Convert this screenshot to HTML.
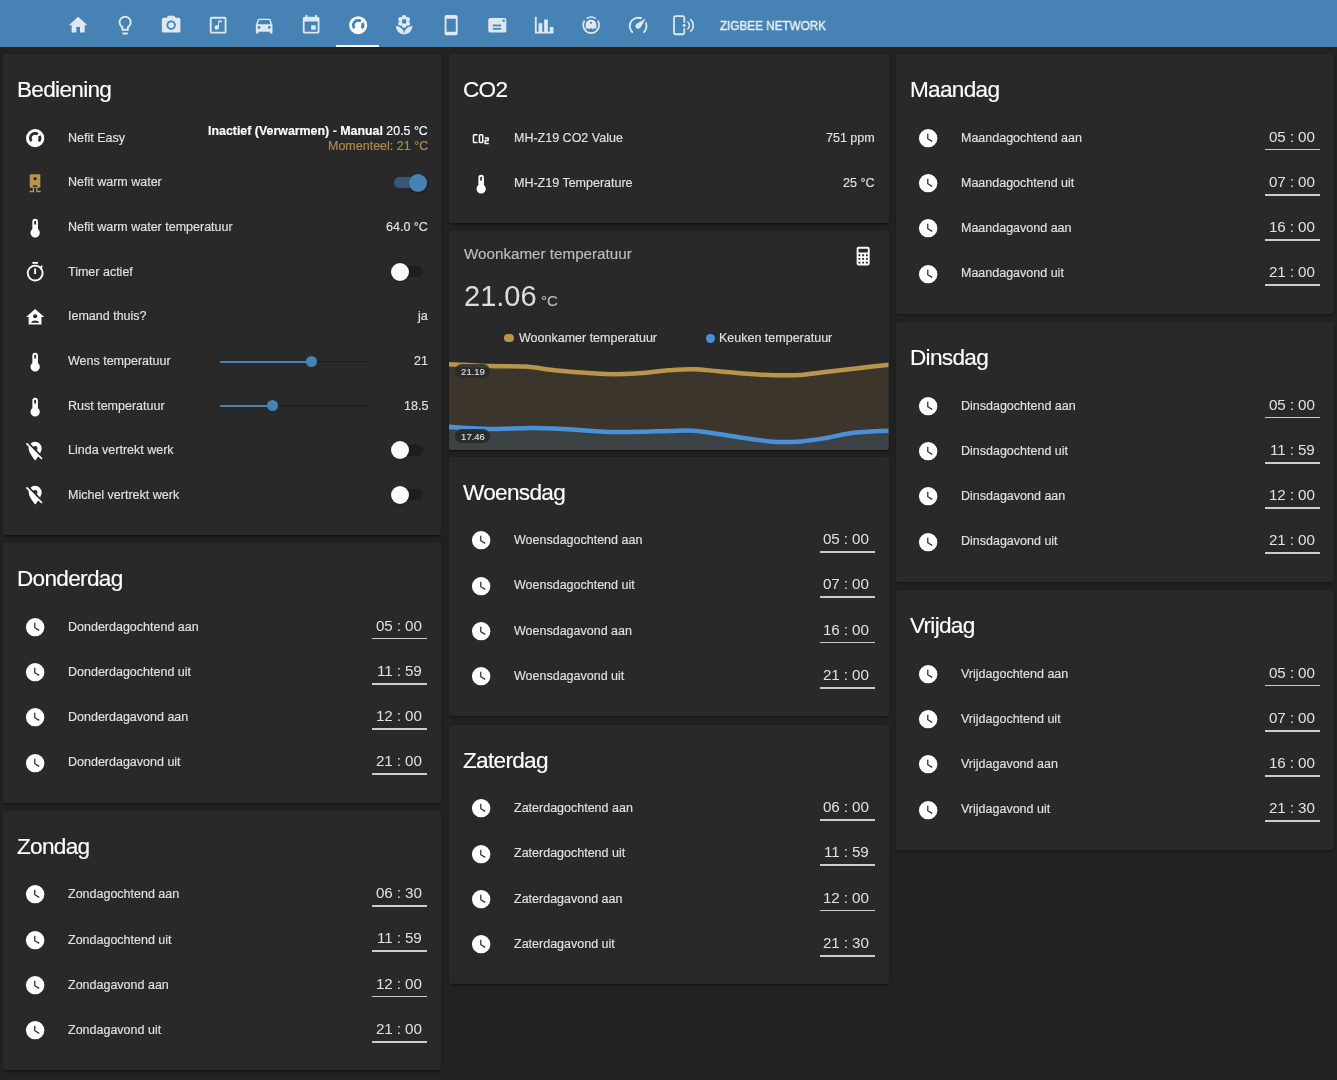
<!DOCTYPE html><html><head><meta charset="utf-8"><style>
html,body{margin:0;padding:0;}
body{width:1337px;height:1080px;background:#222222;position:relative;overflow:hidden;font-family:"Liberation Sans",sans-serif;}
.t{position:absolute;white-space:nowrap;will-change:transform;-webkit-text-stroke:0.15px currentColor;}
.i{position:absolute;display:block;}
.card{position:absolute;background:#292929;border-radius:2px;box-shadow:0 2px 2px 0 rgba(0,0,0,.14),0 1px 5px 0 rgba(0,0,0,.12),0 3px 1px -2px rgba(0,0,0,.2);}
.bar{position:absolute;}
</style></head><body>
<div class="bar" style="left:0;top:0;width:1337px;height:47px;background:#4682b4"></div>
<svg class="i" style="left:67.25px;top:13.85px;width:22.3px;height:22.3px" viewBox="0 0 24 24" fill="rgba(255,255,255,0.82)"><path d="M10,20V14H14V20H19V12H22L12,3L2,12H5V20H10Z"/></svg>
<svg class="i" style="left:113.80px;top:13.85px;width:22.3px;height:22.3px" viewBox="0 0 24 24" fill="rgba(255,255,255,0.82)"><path d="M12,2A7,7 0 0,1 19,9C19,11.38 17.81,13.47 16,14.74V17A1,1 0 0,1 15,18H9A1,1 0 0,1 8,17V14.74C6.19,13.470 5,11.38 5,9A7,7 0 0,1 12,2M9,21V20H15V21A1,1 0 0,1 14,22H10A1,1 0 0,1 9,21M12,4A5,5 0 0,0 7,9C7,11.05 8.23,12.81 10,13.58V16H14V13.58C15.77,12.81 17,11.05 17,9A5,5 0 0,0 12,4Z"/></svg>
<svg class="i" style="left:160.35px;top:13.85px;width:22.3px;height:22.3px" viewBox="0 0 24 24" fill="rgba(255,255,255,0.82)"><path fill-rule="evenodd" d="M4,4H7L9,2H15L17,4H20A2,2 0 0,1 22,6V18A2,2 0 0,1 20,20H4A2,2 0 0,1 2,18V6A2,2 0 0,1 4,4Z M12,7A5,5 0 1,0 12,17A5,5 0 1,0 12,7Z M12,9A3,3 0 1,0 12,15A3,3 0 1,0 12,9Z"/></svg>
<svg class="i" style="left:206.90px;top:13.85px;width:22.3px;height:22.3px" viewBox="0 0 24 24" fill="rgba(255,255,255,0.82)"><path d="M16,9H13V14.5A2.5,2.5 0 0,1 10.5,17A2.5,2.5 0 0,1 8,14.5A2.5,2.5 0 0,1 10.5,12C11.07,12 11.58,12.19 12,12.5V7H16V9M19,3A2,2 0 0,1 21,5V19A2,2 0 0,1 19,21H5A2,2 0 0,1 3,19V5A2,2 0 0,1 5,3H19M5,5V19H19V5H5Z"/></svg>
<svg class="i" style="left:253.45px;top:13.85px;width:22.3px;height:22.3px" viewBox="0 0 24 24" fill="rgba(255,255,255,0.82)"><path d="M5,11L6.5,6.5H17.5L19,11M17.5,16A1.5,1.5 0 0,1 16,14.5A1.5,1.5 0 0,1 17.5,13A1.5,1.5 0 0,1 19,14.5A1.5,1.5 0 0,1 17.5,16M6.5,16A1.5,1.5 0 0,1 5,14.5A1.5,1.5 0 0,1 6.5,13A1.5,1.5 0 0,1 8,14.5A1.5,1.5 0 0,1 6.5,16M18.92,6C18.72,5.42 18.16,5 17.5,5H6.5C5.840,5 5.28,5.42 5.08,6L3,12V20A1,1 0 0,0 4,21H5A1,1 0 0,0 6,20V19H18V20A1,1 0 0,0 19,21H20A1,1 0 0,0 21,20V12L18.92,6Z"/></svg>
<svg class="i" style="left:300.00px;top:13.85px;width:22.3px;height:22.3px" viewBox="0 0 24 24" fill="rgba(255,255,255,0.82)"><path d="M19,19H5V8H19M16,1V3H8V1H6V3H5C3.89,3 3,3.89 3,5V19A2,2 0 0,0 5,21H19A2,2 0 0,0 21,19V5C21,3.89 20.1,3 19,3H18V1M17,12H12V17H17V12Z"/></svg>
<svg class="i" style="left:346.55px;top:13.85px;width:22.3px;height:22.3px" viewBox="0 0 24 24" fill="#ffffff"><circle cx="12" cy="12" r="9.7"/><path fill="none" stroke="#4682b4" stroke-width="3.1" d="M8.055,15.31A5.15,5.15 0 0,1 14.95,7.78M16.55,9.58A5.15,5.15 0 0,1 15.89,15.38"/></svg>
<svg class="i" style="left:393.10px;top:13.85px;width:22.3px;height:22.3px" viewBox="0 0 24 24" fill="rgba(255,255,255,0.82)"><path d="M3,13A9,9 0 0,0 12,22C12,17 7.97,13 3,13M12,5.5A2.5,2.5 0 0,1 14.5,8A2.5,2.5 0 0,1 12,10.5A2.5,2.5 0 0,1 9.5,8A2.5,2.5 0 0,1 12,5.5M5.6,10.25A2.5,2.5 0 0,0 8.1,12.75C8.63,12.75 9.12,12.58 9.5,12.31C9.5,12.37 9.5,12.43 9.5,12.5A2.5,2.5 0 0,0 12,15A2.5,2.5 0 0,0 14.5,12.5C14.5,12.43 14.5,12.37 14.5,12.31C14.88,12.58 15.37,12.75 15.9,12.75C17.28,12.75 18.4,11.63 18.4,10.25C18.4,9.25 17.81,8.4 16.97,8C17.81,7.6 18.4,6.74 18.4,5.75C18.4,4.37 17.28,3.25 15.9,3.25C15.37,3.25 14.88,3.41 14.5,3.69C14.5,3.63 14.5,3.56 14.5,3.5A2.5,2.5 0 0,0 12,1A2.5,2.5 0 0,0 9.5,3.5C9.5,3.56 9.5,3.63 9.5,3.69C9.12,3.41 8.63,3.25 8.1,3.25A2.5,2.5 0 0,0 5.6,5.75C5.6,6.74 6.19,7.6 7.03,8C6.19,8.4 5.6,9.25 5.6,10.25M12,22A9,9 0 0,0 21,13C16,13 12,17 12,22Z"/></svg>
<svg class="i" style="left:439.65px;top:13.85px;width:22.3px;height:22.3px" viewBox="0 0 24 24" fill="rgba(255,255,255,0.82)"><path d="M17,19H7V5H17M17,1H7C5.89,1 5,1.89 5,3V21A2,2 0 0,0 7,23H17A2,2 0 0,0 19,21V3C19,1.89 18.1,1 17,1Z"/></svg>
<svg class="i" style="left:486.20px;top:13.85px;width:22.3px;height:22.3px" viewBox="0 0 24 24" fill="rgba(255,255,255,0.82)"><rect x="2.5" y="4.3" width="19.4" height="15.6" rx="2"/><rect x="7.3" y="11.4" width="9" height="1.9" fill="#4682b4"/><rect x="7.3" y="15" width="9" height="1.9" fill="#4682b4"/><rect x="17.8" y="6" width="2.4" height="2.4" fill="#4682b4"/></svg>
<svg class="i" style="left:532.75px;top:13.85px;width:22.3px;height:22.3px" viewBox="0 0 24 24" fill="rgba(255,255,255,0.82)"><path d="M22,21H2V3H4V19H6V10H10V19H12V6H16V19H18V14H22V21Z"/></svg>
<svg class="i" style="left:580.10px;top:13.85px;width:22.3px;height:22.3px" viewBox="0 0 24 24" fill="rgba(255,255,255,0.82)"><path fill="none" stroke="rgba(255,255,255,0.82)" stroke-width="1.8" d="M7.07,4.95A8.6,8.6 0 0,1 16.93,4.95M19.05,7.07A8.6,8.6 0 1,1 4.95,7.07"/><path d="M6.1,16.4V11.6A5.75,5.75 0 0,1 17.6,11.6V16.4L15.7,15.2L13.8,16.4L11.85,15.2L9.9,16.4L8,15.2Z"/><circle cx="11.85" cy="9.4" r="1.15" fill="#4682b4"/></svg>
<svg class="i" style="left:626.55px;top:13.85px;width:22.3px;height:22.3px" viewBox="0 0 24 24" fill="rgba(255,255,255,0.82)"><path d="M12,16A3,3 0 0,1 9,13C9,11.88 9.61,10.9 10.5,10.39L20.21,4.77L14.68,14.35C14.18,15.33 13.17,16 12,16M12,3C13.81,3 15.5,3.5 16.97,4.32L14.87,5.53C14,5.19 13,5 12,5A8,8 0 0,0 4,13C4,15.21 4.89,17.21 6.34,18.65H6.35C6.74,19.04 6.74,19.67 6.35,20.06C5.96,20.45 5.320,20.45 4.93,20.07V20.07C3.12,18.26 2,15.76 2,13A10,10 0 0,1 12,3M22,13C22,15.76 20.88,18.26 19.07,20.07V20.07C18.68,20.45 18.05,20.45 17.66,20.06C17.27,19.67 17.27,19.04 17.66,18.65V18.65C19.11,17.2 20,15.21 20,13C20,12 19.81,11 19.46,10.1L20.67,8C21.5,9.5 22,11.18 22,13Z"/></svg>
<svg class="i" style="left:672.40px;top:13.85px;width:22.3px;height:22.3px" viewBox="0 0 24 24" fill="rgba(255,255,255,0.82)"><path fill="none" stroke="rgba(255,255,255,0.82)" stroke-width="1.9" d="M13.25,9.3V4.1Q13.25,2.3 11.45,2.3H4Q2.15,2.3 2.15,4.1V20Q2.15,21.8 4,21.8H11.45Q13.25,21.8 13.25,20V15.3"/><circle cx="13.1" cy="12.3" r="1.6"/><path fill="none" stroke="rgba(255,255,255,0.82)" stroke-width="1.7" d="M16.6,8.2A5,5 0 0,1 16.6,16.4M19.6,5.6A8.5,8.5 0 0,1 19.6,19"/></svg>
<div class="bar" style="left:336px;top:45px;width:43px;height:2px;background:#fff"></div>
<div class="t" style="left:719.80px;top:18.48px;font-size:12.8px;line-height:15.36px;color:rgba(255,255,255,0.84);font-weight:normal;letter-spacing:0px;-webkit-text-stroke:0.4px rgba(255,255,255,0.84);transform-origin:0 50%;transform:scaleX(0.915)">ZIGBEE NETWORK</div>
<div class="card" style="left:3px;top:54px;width:438px;height:481px"></div>
<div class="t" style="left:16.60px;top:76.01px;font-size:22.6px;line-height:27.12px;color:#ffffff;font-weight:normal;letter-spacing:-0.7px">Bediening</div>
<div class="t" style="left:68.00px;top:130.77px;font-size:12.5px;line-height:15.0px;color:#e1e1e1;font-weight:normal;">Nefit Easy</div>
<svg class="i" style="left:23.85px;top:127.15px;width:22.3px;height:22.3px" viewBox="0 0 24 24" fill="#ffffff"><circle cx="12" cy="12" r="9.8"/><path fill="none" stroke="#292929" stroke-width="3.0" d="M8.055,15.31A5.15,5.15 0 0,1 14.95,7.78M16.55,9.58A5.15,5.15 0 0,1 15.89,15.38"/></svg>
<div class="t" style="left:68.00px;top:175.41px;font-size:12.5px;line-height:15.0px;color:#e1e1e1;font-weight:normal;">Nefit warm water</div>
<svg class="i" style="left:23.85px;top:171.79px;width:22.3px;height:22.3px" viewBox="0 0 24 24" fill="#b8954a"><rect x="6.2" y="2.3" width="11.4" height="14.6" rx="1.3"/><circle cx="11.9" cy="7.2" r="1.75" fill="#292929"/><rect x="9.8" y="14.3" width="4.5" height="1.6" fill="#292929"/><path d="M9.4,16.5H10.9V21.8H6V20.3H9.4Z M14.6,16.5H13.1V21.8H18V20.3H14.6Z"/></svg>
<div class="t" style="left:68.00px;top:220.05px;font-size:12.5px;line-height:15.0px;color:#e1e1e1;font-weight:normal;">Nefit warm water temperatuur</div>
<svg class="i" style="left:23.85px;top:217.23px;width:22.3px;height:22.3px" viewBox="0 0 24 24" fill="#ffffff"><path fill-rule="evenodd" d="M15,13V5A3,3 0 0,0 9,5V13A5,5 0 1,0 15,13Z M12,4A1,1 0 0,1 13,5V8H11V5A1,1 0 0,1 12,4Z"/></svg>
<div class="t" style="left:68.00px;top:264.69px;font-size:12.5px;line-height:15.0px;color:#e1e1e1;font-weight:normal;">Timer actief</div>
<svg class="i" style="left:23.85px;top:261.07px;width:22.3px;height:22.3px" viewBox="0 0 24 24" fill="#ffffff"><path d="M12,20A7,7 0 0,1 5,13A7,7 0 0,1 12,6A7,7 0 0,1 19,13A7,7 0 0,1 12,20M19.03,7.39L20.45,5.97C20,5.46 19.55,5 19.04,4.56L17.62,6C16.07,4.74 14.12,4 12,4A9,9 0 0,0 3,13A9,9 0 0,0 12,22C17,22 21,17.97 21,13C21,10.88 20.26,8.93 19.03,7.39M11,14H13V8H11M15,1H9V3H15V1Z"/></svg>
<div class="t" style="left:68.00px;top:309.33px;font-size:12.5px;line-height:15.0px;color:#e1e1e1;font-weight:normal;">Iemand thuis?</div>
<svg class="i" style="left:23.85px;top:305.71px;width:22.3px;height:22.3px" viewBox="0 0 24 24" fill="#ffffff"><path d="M12,3.3L2.3,11.8H5V19.9H18.8V11.8H21.7L12,3.3Z"/><circle cx="12" cy="11.1" r="2.2" fill="#292929"/><path fill="#292929" d="M7.7,18.1C8.3,14.6 15.7,14.6 16.3,18.1Z"/></svg>
<div class="t" style="left:68.00px;top:353.97px;font-size:12.5px;line-height:15.0px;color:#e1e1e1;font-weight:normal;">Wens temperatuur</div>
<svg class="i" style="left:23.85px;top:351.15px;width:22.3px;height:22.3px" viewBox="0 0 24 24" fill="#ffffff"><path fill-rule="evenodd" d="M15,13V5A3,3 0 0,0 9,5V13A5,5 0 1,0 15,13Z M12,4A1,1 0 0,1 13,5V8H11V5A1,1 0 0,1 12,4Z"/></svg>
<div class="t" style="left:68.00px;top:398.61px;font-size:12.5px;line-height:15.0px;color:#e1e1e1;font-weight:normal;">Rust temperatuur</div>
<svg class="i" style="left:23.85px;top:395.79px;width:22.3px;height:22.3px" viewBox="0 0 24 24" fill="#ffffff"><path fill-rule="evenodd" d="M15,13V5A3,3 0 0,0 9,5V13A5,5 0 1,0 15,13Z M12,4A1,1 0 0,1 13,5V8H11V5A1,1 0 0,1 12,4Z"/></svg>
<div class="t" style="left:68.00px;top:443.25px;font-size:12.5px;line-height:15.0px;color:#e1e1e1;font-weight:normal;">Linda vertrekt werk</div>
<svg class="i" style="left:23.85px;top:439.63px;width:22.3px;height:22.3px" viewBox="0 0 24 24" fill="#ffffff"><path d="M16.37,16.1L11.75,11.47L11.64,11.36L3.27,3L2,4.27L5.18,7.45C5.06,7.95 5,8.46 5,9C5,14.25 12,22 12,22C12,22 13.67,20.15 15.37,17.65L18.73,21L20,19.72M12,6.5A2.5,2.5 0 0,1 14.5,9C14.5,9.73 14.17,10.39 13.67,10.85L17.3,14.5C18.28,12.62 19,10.68 19,9A7,7 0 0,0 12,2C10,2 8.24,2.82 6.96,4.14L10.15,7.33C10.61,6.82 11.26,6.5 12,6.5Z"/></svg>
<div class="t" style="left:68.00px;top:487.89px;font-size:12.5px;line-height:15.0px;color:#e1e1e1;font-weight:normal;">Michel vertrekt werk</div>
<svg class="i" style="left:23.85px;top:484.27px;width:22.3px;height:22.3px" viewBox="0 0 24 24" fill="#ffffff"><path d="M16.37,16.1L11.75,11.47L11.64,11.36L3.27,3L2,4.27L5.18,7.45C5.06,7.95 5,8.46 5,9C5,14.25 12,22 12,22C12,22 13.67,20.15 15.37,17.65L18.73,21L20,19.72M12,6.5A2.5,2.5 0 0,1 14.5,9C14.5,9.73 14.17,10.39 13.67,10.85L17.3,14.5C18.28,12.62 19,10.68 19,9A7,7 0 0,0 12,2C10,2 8.24,2.82 6.96,4.14L10.15,7.33C10.61,6.82 11.26,6.5 12,6.5Z"/></svg>
<div class="t" style="right:908.80px;top:123.56px;font-size:12.4px;line-height:14.88px;color:#ffffff;font-weight:bold;text-align:right;">Inactief (Verwarmen) - Manual <span style="font-weight:normal">20.5 °C</span></div>
<div class="t" style="right:908.80px;top:138.97px;font-size:12.5px;line-height:15.0px;color:#ad8d48;font-weight:normal;text-align:right;">Momenteel: 21 °C</div>
<div class="t" style="right:908.80px;top:220.05px;font-size:12.5px;line-height:15.0px;color:#e1e1e1;font-weight:normal;text-align:right;">64.0 °C</div>
<div class="t" style="right:908.80px;top:309.33px;font-size:12.5px;line-height:15.0px;color:#e1e1e1;font-weight:normal;text-align:right;">ja</div>
<div class="t" style="right:908.80px;top:353.97px;font-size:12.5px;line-height:15.0px;color:#e1e1e1;font-weight:normal;text-align:right;">21</div>
<div class="t" style="right:908.80px;top:398.61px;font-size:12.5px;line-height:15.0px;color:#e1e1e1;font-weight:normal;text-align:right;">18.5</div>
<div class="bar" style="left:394px;top:177.0px;width:29px;height:11px;border-radius:6px;background:rgba(70,130,180,0.55)"></div>
<div class="bar" style="left:409px;top:173.5px;width:18px;height:18px;border-radius:50%;background:#4682b4;box-shadow:0 1px 2px rgba(0,0,0,.3)"></div>
<div class="bar" style="left:394px;top:266.0px;width:29px;height:11px;border-radius:6px;background:#1e1e1e"></div>
<div class="bar" style="left:391px;top:262.5px;width:18px;height:18px;border-radius:50%;background:#fafafa;box-shadow:0 1px 2px rgba(0,0,0,.3)"></div>
<div class="bar" style="left:394px;top:444.5px;width:29px;height:11px;border-radius:6px;background:#1e1e1e"></div>
<div class="bar" style="left:391px;top:441px;width:18px;height:18px;border-radius:50%;background:#fafafa;box-shadow:0 1px 2px rgba(0,0,0,.3)"></div>
<div class="bar" style="left:394px;top:489.0px;width:29px;height:11px;border-radius:6px;background:#1e1e1e"></div>
<div class="bar" style="left:391px;top:485.5px;width:18px;height:18px;border-radius:50%;background:#fafafa;box-shadow:0 1px 2px rgba(0,0,0,.3)"></div>
<div class="bar" style="left:220px;top:361.0px;width:152px;height:1px;background:#1f1f1f"></div>
<div class="bar" style="left:220px;top:360.5px;width:91.5px;height:2px;background:#4682b4"></div>
<div class="bar" style="left:306.0px;top:356.0px;width:11px;height:11px;border-radius:50%;background:#4682b4"></div>
<div class="bar" style="left:220px;top:405.0px;width:152px;height:1px;background:#1f1f1f"></div>
<div class="bar" style="left:220px;top:404.5px;width:52.5px;height:2px;background:#4682b4"></div>
<div class="bar" style="left:267.0px;top:400.0px;width:11px;height:11px;border-radius:50%;background:#4682b4"></div>
<div class="card" style="left:3px;top:543px;width:438px;height:259.70000000000005px"></div>
<div class="t" style="left:16.60px;top:565.01px;font-size:22.6px;line-height:27.12px;color:#ffffff;font-weight:normal;letter-spacing:-0.7px">Donderdag</div>
<svg class="i" style="left:23.85px;top:615.75px;width:22.3px;height:22.3px" viewBox="0 0 24 24" fill="#ffffff"><circle cx="12" cy="12" r="9.9"/><path fill="none" stroke="#292929" stroke-width="1.35" d="M11.6,7.2V12.6L16.4,15.5"/></svg>
<div class="t" style="left:68.00px;top:619.67px;font-size:12.5px;line-height:15.0px;color:#e1e1e1;font-weight:normal;">Donderdagochtend aan</div>
<div class="t" style="right:915.50px;top:616.51px;font-size:15.2px;line-height:18.24px;color:#e1e1e1;font-weight:normal;text-align:right;letter-spacing:-0.1px;-webkit-text-stroke:0">05 : 00</div>
<div class="bar" style="left:372px;top:637.50px;width:55px;height:1.75px;background:#cdcdcd"></div>
<svg class="i" style="left:23.85px;top:661.00px;width:22.3px;height:22.3px" viewBox="0 0 24 24" fill="#ffffff"><circle cx="12" cy="12" r="9.9"/><path fill="none" stroke="#292929" stroke-width="1.35" d="M11.6,7.2V12.6L16.4,15.5"/></svg>
<div class="t" style="left:68.00px;top:664.92px;font-size:12.5px;line-height:15.0px;color:#e1e1e1;font-weight:normal;">Donderdagochtend uit</div>
<div class="t" style="right:915.50px;top:661.76px;font-size:15.2px;line-height:18.24px;color:#e1e1e1;font-weight:normal;text-align:right;letter-spacing:-0.1px;-webkit-text-stroke:0">11 : 59</div>
<div class="bar" style="left:372px;top:682.75px;width:55px;height:1.75px;background:#cdcdcd"></div>
<svg class="i" style="left:23.85px;top:706.25px;width:22.3px;height:22.3px" viewBox="0 0 24 24" fill="#ffffff"><circle cx="12" cy="12" r="9.9"/><path fill="none" stroke="#292929" stroke-width="1.35" d="M11.6,7.2V12.6L16.4,15.5"/></svg>
<div class="t" style="left:68.00px;top:710.17px;font-size:12.5px;line-height:15.0px;color:#e1e1e1;font-weight:normal;">Donderdagavond aan</div>
<div class="t" style="right:915.50px;top:707.01px;font-size:15.2px;line-height:18.24px;color:#e1e1e1;font-weight:normal;text-align:right;letter-spacing:-0.1px;-webkit-text-stroke:0">12 : 00</div>
<div class="bar" style="left:372px;top:728.00px;width:55px;height:1.75px;background:#cdcdcd"></div>
<svg class="i" style="left:23.85px;top:751.50px;width:22.3px;height:22.3px" viewBox="0 0 24 24" fill="#ffffff"><circle cx="12" cy="12" r="9.9"/><path fill="none" stroke="#292929" stroke-width="1.35" d="M11.6,7.2V12.6L16.4,15.5"/></svg>
<div class="t" style="left:68.00px;top:755.42px;font-size:12.5px;line-height:15.0px;color:#e1e1e1;font-weight:normal;">Donderdagavond uit</div>
<div class="t" style="right:915.50px;top:752.26px;font-size:15.2px;line-height:18.24px;color:#e1e1e1;font-weight:normal;text-align:right;letter-spacing:-0.1px;-webkit-text-stroke:0">21 : 00</div>
<div class="bar" style="left:372px;top:773.25px;width:55px;height:1.75px;background:#cdcdcd"></div>
<div class="card" style="left:3px;top:810.6px;width:438px;height:259.69999999999993px"></div>
<div class="t" style="left:16.60px;top:832.61px;font-size:22.6px;line-height:27.12px;color:#ffffff;font-weight:normal;letter-spacing:-0.7px">Zondag</div>
<svg class="i" style="left:23.85px;top:883.35px;width:22.3px;height:22.3px" viewBox="0 0 24 24" fill="#ffffff"><circle cx="12" cy="12" r="9.9"/><path fill="none" stroke="#292929" stroke-width="1.35" d="M11.6,7.2V12.6L16.4,15.5"/></svg>
<div class="t" style="left:68.00px;top:887.27px;font-size:12.5px;line-height:15.0px;color:#e1e1e1;font-weight:normal;">Zondagochtend aan</div>
<div class="t" style="right:915.50px;top:884.11px;font-size:15.2px;line-height:18.24px;color:#e1e1e1;font-weight:normal;text-align:right;letter-spacing:-0.1px;-webkit-text-stroke:0">06 : 30</div>
<div class="bar" style="left:372px;top:905.10px;width:55px;height:1.75px;background:#cdcdcd"></div>
<svg class="i" style="left:23.85px;top:928.60px;width:22.3px;height:22.3px" viewBox="0 0 24 24" fill="#ffffff"><circle cx="12" cy="12" r="9.9"/><path fill="none" stroke="#292929" stroke-width="1.35" d="M11.6,7.2V12.6L16.4,15.5"/></svg>
<div class="t" style="left:68.00px;top:932.52px;font-size:12.5px;line-height:15.0px;color:#e1e1e1;font-weight:normal;">Zondagochtend uit</div>
<div class="t" style="right:915.50px;top:929.36px;font-size:15.2px;line-height:18.24px;color:#e1e1e1;font-weight:normal;text-align:right;letter-spacing:-0.1px;-webkit-text-stroke:0">11 : 59</div>
<div class="bar" style="left:372px;top:950.35px;width:55px;height:1.75px;background:#cdcdcd"></div>
<svg class="i" style="left:23.85px;top:973.85px;width:22.3px;height:22.3px" viewBox="0 0 24 24" fill="#ffffff"><circle cx="12" cy="12" r="9.9"/><path fill="none" stroke="#292929" stroke-width="1.35" d="M11.6,7.2V12.6L16.4,15.5"/></svg>
<div class="t" style="left:68.00px;top:977.77px;font-size:12.5px;line-height:15.0px;color:#e1e1e1;font-weight:normal;">Zondagavond aan</div>
<div class="t" style="right:915.50px;top:974.61px;font-size:15.2px;line-height:18.24px;color:#e1e1e1;font-weight:normal;text-align:right;letter-spacing:-0.1px;-webkit-text-stroke:0">12 : 00</div>
<div class="bar" style="left:372px;top:995.60px;width:55px;height:1.75px;background:#cdcdcd"></div>
<svg class="i" style="left:23.85px;top:1019.10px;width:22.3px;height:22.3px" viewBox="0 0 24 24" fill="#ffffff"><circle cx="12" cy="12" r="9.9"/><path fill="none" stroke="#292929" stroke-width="1.35" d="M11.6,7.2V12.6L16.4,15.5"/></svg>
<div class="t" style="left:68.00px;top:1023.02px;font-size:12.5px;line-height:15.0px;color:#e1e1e1;font-weight:normal;">Zondagavond uit</div>
<div class="t" style="right:915.50px;top:1019.86px;font-size:15.2px;line-height:18.24px;color:#e1e1e1;font-weight:normal;text-align:right;letter-spacing:-0.1px;-webkit-text-stroke:0">21 : 00</div>
<div class="bar" style="left:372px;top:1040.85px;width:55px;height:1.75px;background:#cdcdcd"></div>
<div class="card" style="left:449px;top:54px;width:439.5px;height:169px"></div>
<div class="t" style="left:462.60px;top:76.01px;font-size:22.6px;line-height:27.12px;color:#ffffff;font-weight:normal;letter-spacing:-0.7px">CO2</div>
<div class="t" style="left:514.00px;top:131.17px;font-size:12.5px;line-height:15.0px;color:#e1e1e1;font-weight:normal;">MH-Z19 CO2 Value</div>
<div class="t" style="right:462.50px;top:131.17px;font-size:12.5px;line-height:15.0px;color:#e1e1e1;font-weight:normal;text-align:right;">751 ppm</div>
<div class="t" style="left:514.00px;top:175.87px;font-size:12.5px;line-height:15.0px;color:#e1e1e1;font-weight:normal;">MH-Z19 Temperature</div>
<div class="t" style="right:462.50px;top:175.87px;font-size:12.5px;line-height:15.0px;color:#e1e1e1;font-weight:normal;text-align:right;">25 °C</div>
<svg class="i" style="left:470px;top:131px;width:22px;height:16px" viewBox="0 0 22 16" fill="none" stroke="#fff" stroke-width="1.5" stroke-linejoin="round"><path d="M7.6,3.85H4.3Q3.45,3.85 3.45,4.7V10.7Q3.45,11.55 4.3,11.55H7.6"/><rect x="9.45" y="3.85" width="3.3" height="7.7" rx="0.8"/><path d="M14.9,7.0H18.2V9.5H15.1V12.4H18.7"/></svg>
<svg class="i" style="left:469.85px;top:172.85px;width:22.3px;height:22.3px" viewBox="0 0 24 24" fill="#ffffff"><path fill-rule="evenodd" d="M15,13V5A3,3 0 0,0 9,5V13A5,5 0 1,0 15,13Z M12,4A1,1 0 0,1 13,5V8H11V5A1,1 0 0,1 12,4Z"/></svg>
<div class="card" style="left:449px;top:230.5px;width:439.5px;height:219.3px"></div>
<div class="t" style="left:463.50px;top:245.41px;font-size:15.2px;line-height:18.24px;color:#bdbdbd;font-weight:normal;">Woonkamer temperatuur</div>
<svg class="i" style="left:852.15px;top:244.85px;width:22.3px;height:22.3px" viewBox="0 0 24 24" fill="#ffffff"><path fill-rule="evenodd" d="M7,2H17A2,2 0 0,1 19,4V20A2,2 0 0,1 17,22H7A2,2 0 0,1 5,20V4A2,2 0 0,1 7,2Z M7,4V8H17V4H7Z M7,10V12H9V10H7Z M11,10V12H13V10H11Z M15,10V12H17V10H15Z M7,14V16H9V14H7Z M11,14V16H13V14H11Z M15,14V16H17V14H15Z M15,18V20H17V18H15Z M7,18V20H9V18H7Z M11,18V20H13V18H11Z"/></svg>
<div class="t" style="left:463.50px;top:278.85px;font-size:29px;line-height:34.8px;color:rgba(235,235,235,0.92);font-weight:normal;-webkit-text-stroke:0">21.06</div>
<div class="t" style="left:541.00px;top:292.20px;font-size:15px;line-height:18.0px;color:#bdbdbd;font-weight:normal;">°C</div>
<div class="bar" style="left:504px;top:333.7px;width:10px;height:8.6px;border-radius:4.3px;background:#b8954a"></div>
<div class="t" style="left:518.50px;top:331.17px;font-size:12.5px;line-height:15.0px;color:#e1e1e1;font-weight:normal;">Woonkamer temperatuur</div>
<div class="bar" style="left:705.5px;top:333.5px;width:9px;height:9px;border-radius:50%;background:#4a90d9"></div>
<div class="t" style="left:718.70px;top:331.17px;font-size:12.5px;line-height:15.0px;color:#e1e1e1;font-weight:normal;">Keuken temperatuur</div>
<svg class="i" style="left:0;top:0;width:1337px;height:1080px" viewBox="0 0 1337 1080"><clipPath id="gc"><rect x="449" y="340" width="439.5" height="109.8" rx="2"/></clipPath><g clip-path="url(#gc)"><path d="M446,364.0 C453.33,364.33 476.83,365.57 490,366.0 C503.17,366.43 513.33,365.80 525,366.6 C536.67,367.40 546.67,369.57 560,370.8 C573.33,372.03 592.50,373.55 605,374.0 C617.50,374.45 624.33,374.12 635,373.5 C645.67,372.88 659.22,371.02 669,370.3 C678.78,369.58 685.48,369.05 693.7,369.2 C701.92,369.35 708.72,370.38 718.3,371.2 C727.88,372.02 741.60,373.42 751.2,374.1 C760.80,374.78 767.67,375.17 775.9,375.3 C784.13,375.43 792.38,375.45 800.6,374.9 C808.82,374.35 815.62,373.12 825.2,372.0 C834.78,370.88 847.13,369.43 858.1,368.2 C869.07,366.97 885.52,365.20 891,364.6 L891,452 L446,452Z" fill="#3c352b"/><path d="M446,426.7 C453.33,427.08 475.83,428.80 490,429.0 C504.17,429.20 518.67,427.90 531,427.9 C543.33,427.90 551.67,428.35 564,429.0 C576.33,429.65 592.67,431.33 605,431.8 C617.33,432.27 627.33,431.93 638,431.8 C648.67,431.67 659.72,431.18 669,431.0 C678.28,430.82 685.48,430.20 693.7,430.7 C701.92,431.20 708.72,432.63 718.3,434.0 C727.88,435.37 741.60,437.58 751.2,438.9 C760.80,440.22 767.67,441.48 775.9,441.9 C784.13,442.32 792.38,442.03 800.6,441.4 C808.82,440.77 816.98,439.47 825.2,438.1 C833.42,436.73 841.67,434.35 849.9,433.2 C858.13,432.05 867.75,431.63 874.6,431.2 C881.45,430.77 888.27,430.70 891,430.6 L891,452 L446,452Z" fill="#3d4244"/><path d="M446,364.0 C453.33,364.33 476.83,365.57 490,366.0 C503.17,366.43 513.33,365.80 525,366.6 C536.67,367.40 546.67,369.57 560,370.8 C573.33,372.03 592.50,373.55 605,374.0 C617.50,374.45 624.33,374.12 635,373.5 C645.67,372.88 659.22,371.02 669,370.3 C678.78,369.58 685.48,369.05 693.7,369.2 C701.92,369.35 708.72,370.38 718.3,371.2 C727.88,372.02 741.60,373.42 751.2,374.1 C760.80,374.78 767.67,375.17 775.9,375.3 C784.13,375.43 792.38,375.45 800.6,374.9 C808.82,374.35 815.62,373.12 825.2,372.0 C834.78,370.88 847.13,369.43 858.1,368.2 C869.07,366.97 885.52,365.20 891,364.6" fill="none" stroke="#b8954a" stroke-width="4.5"/><path d="M446,426.7 C453.33,427.08 475.83,428.80 490,429.0 C504.17,429.20 518.67,427.90 531,427.9 C543.33,427.90 551.67,428.35 564,429.0 C576.33,429.65 592.67,431.33 605,431.8 C617.33,432.27 627.33,431.93 638,431.8 C648.67,431.67 659.72,431.18 669,431.0 C678.28,430.82 685.48,430.20 693.7,430.7 C701.92,431.20 708.72,432.63 718.3,434.0 C727.88,435.37 741.60,437.58 751.2,438.9 C760.80,440.22 767.67,441.48 775.9,441.9 C784.13,442.32 792.38,442.03 800.6,441.4 C808.82,440.77 816.98,439.47 825.2,438.1 C833.42,436.73 841.67,434.35 849.9,433.2 C858.13,432.05 867.75,431.63 874.6,431.2 C881.45,430.77 888.27,430.70 891,430.6" fill="none" stroke="#4a90d9" stroke-width="4.5"/></g></svg>
<div class="bar" style="left:455px;top:364px;width:35px;height:14px;border-radius:7px;background:rgba(40,40,40,0.85)"></div>
<div class="t" style="left:472.50px;top:366.01px;font-size:9.5px;line-height:11.4px;color:#dddddd;font-weight:normal;transform:translateX(-50%)">21.19</div>
<div class="bar" style="left:455px;top:429px;width:35px;height:14px;border-radius:7px;background:rgba(40,40,40,0.85)"></div>
<div class="t" style="left:472.50px;top:431.01px;font-size:9.5px;line-height:11.4px;color:#dddddd;font-weight:normal;transform:translateX(-50%)">17.46</div>
<div class="card" style="left:449px;top:456.5px;width:439.5px;height:259.70000000000005px"></div>
<div class="t" style="left:462.60px;top:478.51px;font-size:22.6px;line-height:27.12px;color:#ffffff;font-weight:normal;letter-spacing:-0.7px">Woensdag</div>
<svg class="i" style="left:469.85px;top:529.25px;width:22.3px;height:22.3px" viewBox="0 0 24 24" fill="#ffffff"><circle cx="12" cy="12" r="9.9"/><path fill="none" stroke="#292929" stroke-width="1.35" d="M11.6,7.2V12.6L16.4,15.5"/></svg>
<div class="t" style="left:514.00px;top:533.17px;font-size:12.5px;line-height:15.0px;color:#e1e1e1;font-weight:normal;">Woensdagochtend aan</div>
<div class="t" style="right:468.00px;top:530.01px;font-size:15.2px;line-height:18.24px;color:#e1e1e1;font-weight:normal;text-align:right;letter-spacing:-0.1px;-webkit-text-stroke:0">05 : 00</div>
<div class="bar" style="left:819.5px;top:551.00px;width:55px;height:1.75px;background:#cdcdcd"></div>
<svg class="i" style="left:469.85px;top:574.50px;width:22.3px;height:22.3px" viewBox="0 0 24 24" fill="#ffffff"><circle cx="12" cy="12" r="9.9"/><path fill="none" stroke="#292929" stroke-width="1.35" d="M11.6,7.2V12.6L16.4,15.5"/></svg>
<div class="t" style="left:514.00px;top:578.42px;font-size:12.5px;line-height:15.0px;color:#e1e1e1;font-weight:normal;">Woensdagochtend uit</div>
<div class="t" style="right:468.00px;top:575.26px;font-size:15.2px;line-height:18.24px;color:#e1e1e1;font-weight:normal;text-align:right;letter-spacing:-0.1px;-webkit-text-stroke:0">07 : 00</div>
<div class="bar" style="left:819.5px;top:596.25px;width:55px;height:1.75px;background:#cdcdcd"></div>
<svg class="i" style="left:469.85px;top:619.75px;width:22.3px;height:22.3px" viewBox="0 0 24 24" fill="#ffffff"><circle cx="12" cy="12" r="9.9"/><path fill="none" stroke="#292929" stroke-width="1.35" d="M11.6,7.2V12.6L16.4,15.5"/></svg>
<div class="t" style="left:514.00px;top:623.67px;font-size:12.5px;line-height:15.0px;color:#e1e1e1;font-weight:normal;">Woensdagavond aan</div>
<div class="t" style="right:468.00px;top:620.51px;font-size:15.2px;line-height:18.24px;color:#e1e1e1;font-weight:normal;text-align:right;letter-spacing:-0.1px;-webkit-text-stroke:0">16 : 00</div>
<div class="bar" style="left:819.5px;top:641.50px;width:55px;height:1.75px;background:#cdcdcd"></div>
<svg class="i" style="left:469.85px;top:665.00px;width:22.3px;height:22.3px" viewBox="0 0 24 24" fill="#ffffff"><circle cx="12" cy="12" r="9.9"/><path fill="none" stroke="#292929" stroke-width="1.35" d="M11.6,7.2V12.6L16.4,15.5"/></svg>
<div class="t" style="left:514.00px;top:668.92px;font-size:12.5px;line-height:15.0px;color:#e1e1e1;font-weight:normal;">Woensdagavond uit</div>
<div class="t" style="right:468.00px;top:665.76px;font-size:15.2px;line-height:18.24px;color:#e1e1e1;font-weight:normal;text-align:right;letter-spacing:-0.1px;-webkit-text-stroke:0">21 : 00</div>
<div class="bar" style="left:819.5px;top:686.75px;width:55px;height:1.75px;background:#cdcdcd"></div>
<div class="card" style="left:449px;top:724.5px;width:439.5px;height:259.70000000000005px"></div>
<div class="t" style="left:462.60px;top:746.51px;font-size:22.6px;line-height:27.12px;color:#ffffff;font-weight:normal;letter-spacing:-0.7px">Zaterdag</div>
<svg class="i" style="left:469.85px;top:797.25px;width:22.3px;height:22.3px" viewBox="0 0 24 24" fill="#ffffff"><circle cx="12" cy="12" r="9.9"/><path fill="none" stroke="#292929" stroke-width="1.35" d="M11.6,7.2V12.6L16.4,15.5"/></svg>
<div class="t" style="left:514.00px;top:801.17px;font-size:12.5px;line-height:15.0px;color:#e1e1e1;font-weight:normal;">Zaterdagochtend aan</div>
<div class="t" style="right:468.00px;top:798.01px;font-size:15.2px;line-height:18.24px;color:#e1e1e1;font-weight:normal;text-align:right;letter-spacing:-0.1px;-webkit-text-stroke:0">06 : 00</div>
<div class="bar" style="left:819.5px;top:819.00px;width:55px;height:1.75px;background:#cdcdcd"></div>
<svg class="i" style="left:469.85px;top:842.50px;width:22.3px;height:22.3px" viewBox="0 0 24 24" fill="#ffffff"><circle cx="12" cy="12" r="9.9"/><path fill="none" stroke="#292929" stroke-width="1.35" d="M11.6,7.2V12.6L16.4,15.5"/></svg>
<div class="t" style="left:514.00px;top:846.42px;font-size:12.5px;line-height:15.0px;color:#e1e1e1;font-weight:normal;">Zaterdagochtend uit</div>
<div class="t" style="right:468.00px;top:843.26px;font-size:15.2px;line-height:18.24px;color:#e1e1e1;font-weight:normal;text-align:right;letter-spacing:-0.1px;-webkit-text-stroke:0">11 : 59</div>
<div class="bar" style="left:819.5px;top:864.25px;width:55px;height:1.75px;background:#cdcdcd"></div>
<svg class="i" style="left:469.85px;top:887.75px;width:22.3px;height:22.3px" viewBox="0 0 24 24" fill="#ffffff"><circle cx="12" cy="12" r="9.9"/><path fill="none" stroke="#292929" stroke-width="1.35" d="M11.6,7.2V12.6L16.4,15.5"/></svg>
<div class="t" style="left:514.00px;top:891.67px;font-size:12.5px;line-height:15.0px;color:#e1e1e1;font-weight:normal;">Zaterdagavond aan</div>
<div class="t" style="right:468.00px;top:888.51px;font-size:15.2px;line-height:18.24px;color:#e1e1e1;font-weight:normal;text-align:right;letter-spacing:-0.1px;-webkit-text-stroke:0">12 : 00</div>
<div class="bar" style="left:819.5px;top:909.50px;width:55px;height:1.75px;background:#cdcdcd"></div>
<svg class="i" style="left:469.85px;top:933.00px;width:22.3px;height:22.3px" viewBox="0 0 24 24" fill="#ffffff"><circle cx="12" cy="12" r="9.9"/><path fill="none" stroke="#292929" stroke-width="1.35" d="M11.6,7.2V12.6L16.4,15.5"/></svg>
<div class="t" style="left:514.00px;top:936.92px;font-size:12.5px;line-height:15.0px;color:#e1e1e1;font-weight:normal;">Zaterdagavond uit</div>
<div class="t" style="right:468.00px;top:933.76px;font-size:15.2px;line-height:18.24px;color:#e1e1e1;font-weight:normal;text-align:right;letter-spacing:-0.1px;-webkit-text-stroke:0">21 : 30</div>
<div class="bar" style="left:819.5px;top:954.75px;width:55px;height:1.75px;background:#cdcdcd"></div>
<div class="card" style="left:896px;top:54px;width:438.29999999999995px;height:259.7px"></div>
<div class="t" style="left:909.60px;top:76.01px;font-size:22.6px;line-height:27.12px;color:#ffffff;font-weight:normal;letter-spacing:-0.7px">Maandag</div>
<svg class="i" style="left:916.85px;top:126.75px;width:22.3px;height:22.3px" viewBox="0 0 24 24" fill="#ffffff"><circle cx="12" cy="12" r="9.9"/><path fill="none" stroke="#292929" stroke-width="1.35" d="M11.6,7.2V12.6L16.4,15.5"/></svg>
<div class="t" style="left:961.00px;top:130.67px;font-size:12.5px;line-height:15.0px;color:#e1e1e1;font-weight:normal;">Maandagochtend aan</div>
<div class="t" style="right:22.20px;top:127.51px;font-size:15.2px;line-height:18.24px;color:#e1e1e1;font-weight:normal;text-align:right;letter-spacing:-0.1px;-webkit-text-stroke:0">05 : 00</div>
<div class="bar" style="left:1265.3px;top:148.50px;width:55px;height:1.75px;background:#cdcdcd"></div>
<svg class="i" style="left:916.85px;top:172.00px;width:22.3px;height:22.3px" viewBox="0 0 24 24" fill="#ffffff"><circle cx="12" cy="12" r="9.9"/><path fill="none" stroke="#292929" stroke-width="1.35" d="M11.6,7.2V12.6L16.4,15.5"/></svg>
<div class="t" style="left:961.00px;top:175.92px;font-size:12.5px;line-height:15.0px;color:#e1e1e1;font-weight:normal;">Maandagochtend uit</div>
<div class="t" style="right:22.20px;top:172.76px;font-size:15.2px;line-height:18.24px;color:#e1e1e1;font-weight:normal;text-align:right;letter-spacing:-0.1px;-webkit-text-stroke:0">07 : 00</div>
<div class="bar" style="left:1265.3px;top:193.75px;width:55px;height:1.75px;background:#cdcdcd"></div>
<svg class="i" style="left:916.85px;top:217.25px;width:22.3px;height:22.3px" viewBox="0 0 24 24" fill="#ffffff"><circle cx="12" cy="12" r="9.9"/><path fill="none" stroke="#292929" stroke-width="1.35" d="M11.6,7.2V12.6L16.4,15.5"/></svg>
<div class="t" style="left:961.00px;top:221.17px;font-size:12.5px;line-height:15.0px;color:#e1e1e1;font-weight:normal;">Maandagavond aan</div>
<div class="t" style="right:22.20px;top:218.01px;font-size:15.2px;line-height:18.24px;color:#e1e1e1;font-weight:normal;text-align:right;letter-spacing:-0.1px;-webkit-text-stroke:0">16 : 00</div>
<div class="bar" style="left:1265.3px;top:239.00px;width:55px;height:1.75px;background:#cdcdcd"></div>
<svg class="i" style="left:916.85px;top:262.50px;width:22.3px;height:22.3px" viewBox="0 0 24 24" fill="#ffffff"><circle cx="12" cy="12" r="9.9"/><path fill="none" stroke="#292929" stroke-width="1.35" d="M11.6,7.2V12.6L16.4,15.5"/></svg>
<div class="t" style="left:961.00px;top:266.42px;font-size:12.5px;line-height:15.0px;color:#e1e1e1;font-weight:normal;">Maandagavond uit</div>
<div class="t" style="right:22.20px;top:263.26px;font-size:15.2px;line-height:18.24px;color:#e1e1e1;font-weight:normal;text-align:right;letter-spacing:-0.1px;-webkit-text-stroke:0">21 : 00</div>
<div class="bar" style="left:1265.3px;top:284.25px;width:55px;height:1.75px;background:#cdcdcd"></div>
<div class="card" style="left:896px;top:322px;width:438.29999999999995px;height:259.70000000000005px"></div>
<div class="t" style="left:909.60px;top:344.01px;font-size:22.6px;line-height:27.12px;color:#ffffff;font-weight:normal;letter-spacing:-0.7px">Dinsdag</div>
<svg class="i" style="left:916.85px;top:394.75px;width:22.3px;height:22.3px" viewBox="0 0 24 24" fill="#ffffff"><circle cx="12" cy="12" r="9.9"/><path fill="none" stroke="#292929" stroke-width="1.35" d="M11.6,7.2V12.6L16.4,15.5"/></svg>
<div class="t" style="left:961.00px;top:398.67px;font-size:12.5px;line-height:15.0px;color:#e1e1e1;font-weight:normal;">Dinsdagochtend aan</div>
<div class="t" style="right:22.20px;top:395.51px;font-size:15.2px;line-height:18.24px;color:#e1e1e1;font-weight:normal;text-align:right;letter-spacing:-0.1px;-webkit-text-stroke:0">05 : 00</div>
<div class="bar" style="left:1265.3px;top:416.50px;width:55px;height:1.75px;background:#cdcdcd"></div>
<svg class="i" style="left:916.85px;top:440.00px;width:22.3px;height:22.3px" viewBox="0 0 24 24" fill="#ffffff"><circle cx="12" cy="12" r="9.9"/><path fill="none" stroke="#292929" stroke-width="1.35" d="M11.6,7.2V12.6L16.4,15.5"/></svg>
<div class="t" style="left:961.00px;top:443.92px;font-size:12.5px;line-height:15.0px;color:#e1e1e1;font-weight:normal;">Dinsdagochtend uit</div>
<div class="t" style="right:22.20px;top:440.76px;font-size:15.2px;line-height:18.24px;color:#e1e1e1;font-weight:normal;text-align:right;letter-spacing:-0.1px;-webkit-text-stroke:0">11 : 59</div>
<div class="bar" style="left:1265.3px;top:461.75px;width:55px;height:1.75px;background:#cdcdcd"></div>
<svg class="i" style="left:916.85px;top:485.25px;width:22.3px;height:22.3px" viewBox="0 0 24 24" fill="#ffffff"><circle cx="12" cy="12" r="9.9"/><path fill="none" stroke="#292929" stroke-width="1.35" d="M11.6,7.2V12.6L16.4,15.5"/></svg>
<div class="t" style="left:961.00px;top:489.17px;font-size:12.5px;line-height:15.0px;color:#e1e1e1;font-weight:normal;">Dinsdagavond aan</div>
<div class="t" style="right:22.20px;top:486.01px;font-size:15.2px;line-height:18.24px;color:#e1e1e1;font-weight:normal;text-align:right;letter-spacing:-0.1px;-webkit-text-stroke:0">12 : 00</div>
<div class="bar" style="left:1265.3px;top:507.00px;width:55px;height:1.75px;background:#cdcdcd"></div>
<svg class="i" style="left:916.85px;top:530.50px;width:22.3px;height:22.3px" viewBox="0 0 24 24" fill="#ffffff"><circle cx="12" cy="12" r="9.9"/><path fill="none" stroke="#292929" stroke-width="1.35" d="M11.6,7.2V12.6L16.4,15.5"/></svg>
<div class="t" style="left:961.00px;top:534.42px;font-size:12.5px;line-height:15.0px;color:#e1e1e1;font-weight:normal;">Dinsdagavond uit</div>
<div class="t" style="right:22.20px;top:531.26px;font-size:15.2px;line-height:18.24px;color:#e1e1e1;font-weight:normal;text-align:right;letter-spacing:-0.1px;-webkit-text-stroke:0">21 : 00</div>
<div class="bar" style="left:1265.3px;top:552.25px;width:55px;height:1.75px;background:#cdcdcd"></div>
<div class="card" style="left:896px;top:590px;width:438.29999999999995px;height:259.70000000000005px"></div>
<div class="t" style="left:909.60px;top:612.01px;font-size:22.6px;line-height:27.12px;color:#ffffff;font-weight:normal;letter-spacing:-0.7px">Vrijdag</div>
<svg class="i" style="left:916.85px;top:662.75px;width:22.3px;height:22.3px" viewBox="0 0 24 24" fill="#ffffff"><circle cx="12" cy="12" r="9.9"/><path fill="none" stroke="#292929" stroke-width="1.35" d="M11.6,7.2V12.6L16.4,15.5"/></svg>
<div class="t" style="left:961.00px;top:666.67px;font-size:12.5px;line-height:15.0px;color:#e1e1e1;font-weight:normal;">Vrijdagochtend aan</div>
<div class="t" style="right:22.20px;top:663.51px;font-size:15.2px;line-height:18.24px;color:#e1e1e1;font-weight:normal;text-align:right;letter-spacing:-0.1px;-webkit-text-stroke:0">05 : 00</div>
<div class="bar" style="left:1265.3px;top:684.50px;width:55px;height:1.75px;background:#cdcdcd"></div>
<svg class="i" style="left:916.85px;top:708.00px;width:22.3px;height:22.3px" viewBox="0 0 24 24" fill="#ffffff"><circle cx="12" cy="12" r="9.9"/><path fill="none" stroke="#292929" stroke-width="1.35" d="M11.6,7.2V12.6L16.4,15.5"/></svg>
<div class="t" style="left:961.00px;top:711.92px;font-size:12.5px;line-height:15.0px;color:#e1e1e1;font-weight:normal;">Vrijdagochtend uit</div>
<div class="t" style="right:22.20px;top:708.76px;font-size:15.2px;line-height:18.24px;color:#e1e1e1;font-weight:normal;text-align:right;letter-spacing:-0.1px;-webkit-text-stroke:0">07 : 00</div>
<div class="bar" style="left:1265.3px;top:729.75px;width:55px;height:1.75px;background:#cdcdcd"></div>
<svg class="i" style="left:916.85px;top:753.25px;width:22.3px;height:22.3px" viewBox="0 0 24 24" fill="#ffffff"><circle cx="12" cy="12" r="9.9"/><path fill="none" stroke="#292929" stroke-width="1.35" d="M11.6,7.2V12.6L16.4,15.5"/></svg>
<div class="t" style="left:961.00px;top:757.17px;font-size:12.5px;line-height:15.0px;color:#e1e1e1;font-weight:normal;">Vrijdagavond aan</div>
<div class="t" style="right:22.20px;top:754.01px;font-size:15.2px;line-height:18.24px;color:#e1e1e1;font-weight:normal;text-align:right;letter-spacing:-0.1px;-webkit-text-stroke:0">16 : 00</div>
<div class="bar" style="left:1265.3px;top:775.00px;width:55px;height:1.75px;background:#cdcdcd"></div>
<svg class="i" style="left:916.85px;top:798.50px;width:22.3px;height:22.3px" viewBox="0 0 24 24" fill="#ffffff"><circle cx="12" cy="12" r="9.9"/><path fill="none" stroke="#292929" stroke-width="1.35" d="M11.6,7.2V12.6L16.4,15.5"/></svg>
<div class="t" style="left:961.00px;top:802.42px;font-size:12.5px;line-height:15.0px;color:#e1e1e1;font-weight:normal;">Vrijdagavond uit</div>
<div class="t" style="right:22.20px;top:799.26px;font-size:15.2px;line-height:18.24px;color:#e1e1e1;font-weight:normal;text-align:right;letter-spacing:-0.1px;-webkit-text-stroke:0">21 : 30</div>
<div class="bar" style="left:1265.3px;top:820.25px;width:55px;height:1.75px;background:#cdcdcd"></div>
</body></html>
